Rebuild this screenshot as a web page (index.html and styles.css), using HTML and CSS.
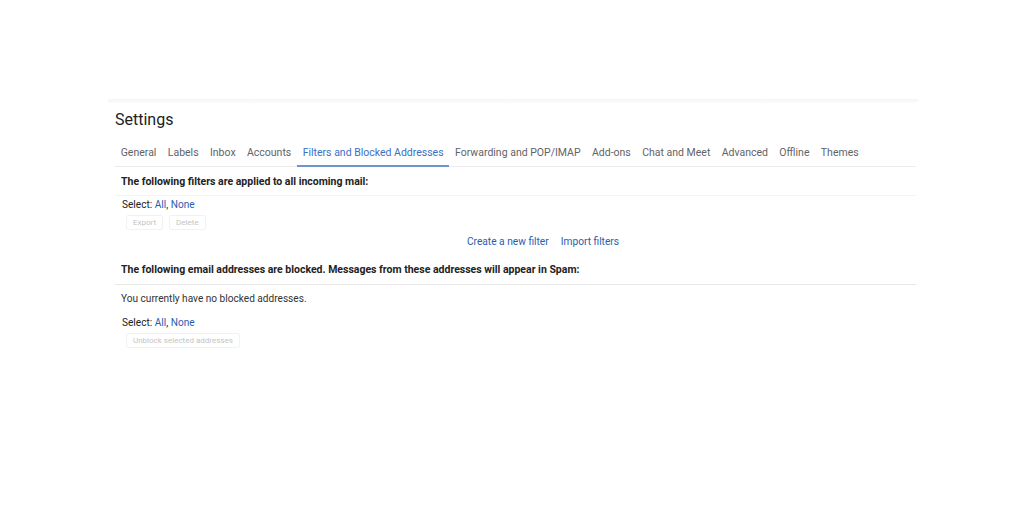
FILE: index.html
```html
<!DOCTYPE html>
<html>
<head>
<meta charset="utf-8">
<link rel="stylesheet" href="styles.css">
</head>
<body>
<div class="page">
  <div class="topstrip"></div>
  <div class="panel">
    <h1 class="title">Settings</h1>
    <nav class="tabs">
      <span class="tab">General</span>
      <span class="tab">Labels</span>
      <span class="tab">Inbox</span>
      <span class="tab">Accounts</span>
      <span class="tab active">Filters and Blocked Addresses</span>
      <span class="tab">Forwarding and POP/IMAP</span>
      <span class="tab">Add-ons</span>
      <span class="tab">Chat and Meet</span>
      <span class="tab">Advanced</span>
      <span class="tab">Offline</span>
      <span class="tab">Themes</span>
    </nav>
    <div class="section">
      <div class="heading faint">The following filters are applied to all incoming mail:</div>
      <div class="select">Select: <a class="link">All</a>, <a class="link">None</a></div>
      <div class="buttons">
        <span class="btn">Export</span>
        <span class="btn">Delete</span>
      </div>
      <div class="actions">
        <a class="link">Create a new filter</a>
        <a class="link">Import filters</a>
      </div>
    </div>
    <div class="section">
      <div class="heading line">The following email addresses are blocked. Messages from these addresses will appear in Spam:</div>
      <div class="note">You currently have no blocked addresses.</div>
      <div class="select">Select: <a class="link">All</a>, <a class="link">None</a></div>
      <div class="buttons">
        <span class="btn">Unblock selected addresses</span>
      </div>
    </div>
  </div>
</div>
</body>
</html>
```

FILE: styles.css
```css
html, body {
  margin: 0;
  padding: 0;
  background: #ffffff;
}
body {
  font-family: Roboto, "Noto Sans", Arial, sans-serif;
  color: #202124;
  width: 1024px;
  height: 519px;
  overflow: hidden;
}
.page {
  padding-top: 99px;
  padding-left: 108px;
  width: 810px;
}
.topstrip {
  height: 4px;
  background: linear-gradient(#f6f6f6, #fbfbfb);
}
.panel {
  padding-left: 7px;
  padding-right: 2px;
}
.title {
  margin: 0;
  font-weight: 400;
  font-size: 16px;
  line-height: 24px;
  padding-top: 5px;
  color: #202124;
}
.tabs {
  display: flex;
  margin-top: 12px;
  border-bottom: 1px solid #ececec;
  font-size: 10.5px;
  color: #5f6368;
}
.tab {
  padding: 2px 5.7px 5px;
  line-height: 14px;
  border-bottom: 2px solid transparent;
  margin-bottom: -1px;
}
.tab.active {
  color: #3a6fc4;
  border-bottom-color: #6a95cf;
}
.section {
  padding-left: 6px;
}
.heading {
  font-weight: 700;
  font-size: 10.5px;
  line-height: 14px;
  color: #222;
  margin-left: -6px;
  padding-left: 6px;
}
.heading.faint {
  padding-top: 8px;
  padding-bottom: 6px;
  border-bottom: 1px solid #f4f4f4;
}
.heading.line {
  padding-top: 14px;
  padding-bottom: 7px;
  border-bottom: 1px solid #e8e8e8;
}
.select {
  font-size: 10.1px;
  line-height: 14px;
  padding-top: 2px;
  padding-left: 1px;
}
.link {
  color: #2a5db0;
}
.buttons {
  display: flex;
  gap: 6px;
  padding-top: 3px;
  padding-left: 5px;
}
.btn {
  font-size: 8px;
  color: #c4c4c4;
  border: 1px solid #f2f2f2;
  border-radius: 2px;
  padding: 2px 6px;
  line-height: 9px;
}
.actions {
  display: flex;
  justify-content: center;
  gap: 12px;
  font-size: 10.2px;
  line-height: 14px;
  padding-top: 5px;
  padding-left: 49px;
}
.note {
  font-size: 10.1px;
  line-height: 14px;
  padding-top: 7px;
  color: #333;
}
.note + .select {
  padding-top: 10px;
}
```
